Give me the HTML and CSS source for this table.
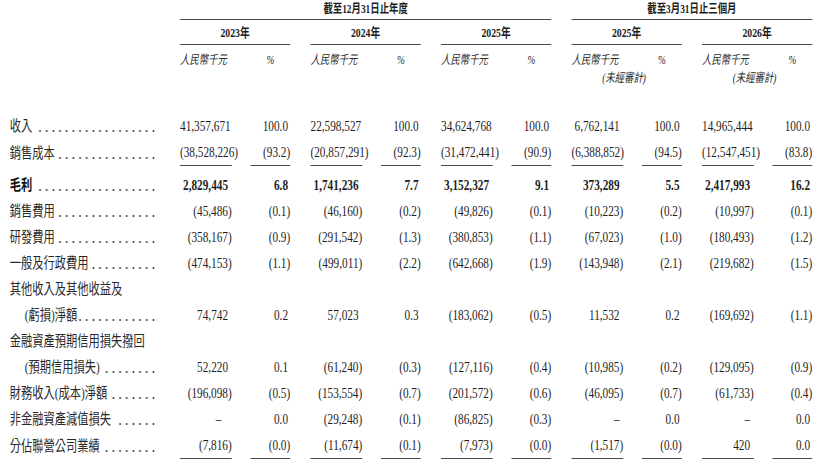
FILE: index.html
```html
<!DOCTYPE html>
<html lang="zh-Hant">
<head>
<meta charset="utf-8">
<title>財務資料</title>
<link rel="stylesheet" href="styles.css">
</head>
<body>
<div class="frame">
<div class="sheet">
  <div class="hrow">
    <div class="sp"></div>
    <div class="super a">截至12月31日止年度</div>
    <div class="super b">截至3月31日止三個月</div>
  </div>
  <div class="hrow">
    <div class="sp"></div>
    <div class="yr">2023年</div>
    <div class="yr">2024年</div>
    <div class="yr">2025年</div>
    <div class="yr">2025年</div>
    <div class="yr">2026年</div>
  </div>
  <div class="hrow units">
    <div class="sp"></div>
    <div class="unit"><div class="u1"><span>人民幣千元</span><span class="pc">%</span></div></div>
    <div class="unit"><div class="u1"><span>人民幣千元</span><span class="pc">%</span></div></div>
    <div class="unit"><div class="u1"><span>人民幣千元</span><span class="pc">%</span></div></div>
    <div class="unit"><div class="u1"><span>人民幣千元</span><span class="pc">%</span></div><div class="u2">(未經審計)</div></div>
    <div class="unit"><div class="u1"><span>人民幣千元</span><span class="pc">%</span></div><div class="u2">(未經審計)</div></div>
  </div>

  <div class="body">
    <div class="row">
      <div class="lbl">收入<span class="dots"></span></div>
      <div class="grp"><span class="amt p">41,357,671</span><span class="pct p">100.0</span></div>
      <div class="grp"><span class="amt p">22,598,527</span><span class="pct p">100.0</span></div>
      <div class="grp"><span class="amt p">34,624,768</span><span class="pct p">100.0</span></div>
      <div class="grp"><span class="amt p">6,762,141</span><span class="pct p">100.0</span></div>
      <div class="grp"><span class="amt p">14,965,444</span><span class="pct p">100.0</span></div>
    </div>
    <div class="row ul">
      <div class="lbl">銷售成本<span class="dots tight"></span></div>
      <div class="grp"><span class="amt">(38,528,226)</span><span class="pct">(93.2)</span></div>
      <div class="grp"><span class="amt">(20,857,291)</span><span class="pct">(92.3)</span></div>
      <div class="grp"><span class="amt">(31,472,441)</span><span class="pct">(90.9)</span></div>
      <div class="grp"><span class="amt">(6,388,852)</span><span class="pct">(94.5)</span></div>
      <div class="grp"><span class="amt">(12,547,451)</span><span class="pct">(83.8)</span></div>
    </div>
    <div class="row bold after-rule">
      <div class="lbl">毛利<span class="dots"></span></div>
      <div class="grp"><span class="amt p">2,829,445</span><span class="pct p">6.8</span></div>
      <div class="grp"><span class="amt p">1,741,236</span><span class="pct p">7.7</span></div>
      <div class="grp"><span class="amt p">3,152,327</span><span class="pct p">9.1</span></div>
      <div class="grp"><span class="amt p">373,289</span><span class="pct p">5.5</span></div>
      <div class="grp"><span class="amt p">2,417,993</span><span class="pct p">16.2</span></div>
    </div>
    <div class="row">
      <div class="lbl">銷售費用<span class="dots tight"></span></div>
      <div class="grp"><span class="amt">(45,486)</span><span class="pct">(0.1)</span></div>
      <div class="grp"><span class="amt">(46,160)</span><span class="pct">(0.2)</span></div>
      <div class="grp"><span class="amt">(49,826)</span><span class="pct">(0.1)</span></div>
      <div class="grp"><span class="amt">(10,223)</span><span class="pct">(0.2)</span></div>
      <div class="grp"><span class="amt">(10,997)</span><span class="pct">(0.1)</span></div>
    </div>
    <div class="row">
      <div class="lbl">研發費用<span class="dots tight"></span></div>
      <div class="grp"><span class="amt">(358,167)</span><span class="pct">(0.9)</span></div>
      <div class="grp"><span class="amt">(291,542)</span><span class="pct">(1.3)</span></div>
      <div class="grp"><span class="amt">(380,853)</span><span class="pct">(1.1)</span></div>
      <div class="grp"><span class="amt">(67,023)</span><span class="pct">(1.0)</span></div>
      <div class="grp"><span class="amt">(180,493)</span><span class="pct">(1.2)</span></div>
    </div>
    <div class="row">
      <div class="lbl">一般及行政費用<span class="dots tight"></span></div>
      <div class="grp"><span class="amt">(474,153)</span><span class="pct">(1.1)</span></div>
      <div class="grp"><span class="amt">(499,011)</span><span class="pct">(2.2)</span></div>
      <div class="grp"><span class="amt">(642,668)</span><span class="pct">(1.9)</span></div>
      <div class="grp"><span class="amt">(143,948)</span><span class="pct">(2.1)</span></div>
      <div class="grp"><span class="amt">(219,682)</span><span class="pct">(1.5)</span></div>
    </div>
    <div class="row">
      <div class="lbl2">
        <div class="l1">其他收入及其他收益及</div>
        <div class="lbl ind">(虧損)淨額<span class="dots tight"></span></div>
      </div>
      <div class="grp"><span class="amt p">74,742</span><span class="pct p">0.2</span></div>
      <div class="grp"><span class="amt p">57,023</span><span class="pct p">0.3</span></div>
      <div class="grp"><span class="amt">(183,062)</span><span class="pct">(0.5)</span></div>
      <div class="grp"><span class="amt p">11,532</span><span class="pct p">0.2</span></div>
      <div class="grp"><span class="amt">(169,692)</span><span class="pct">(1.1)</span></div>
    </div>
    <div class="row">
      <div class="lbl2">
        <div class="l1">金融資產預期信用損失撥回</div>
        <div class="lbl ind">(預期信用損失)<span class="dots"></span></div>
      </div>
      <div class="grp"><span class="amt p">52,220</span><span class="pct p">0.1</span></div>
      <div class="grp"><span class="amt">(61,240)</span><span class="pct">(0.3)</span></div>
      <div class="grp"><span class="amt">(127,116)</span><span class="pct">(0.4)</span></div>
      <div class="grp"><span class="amt">(10,985)</span><span class="pct">(0.2)</span></div>
      <div class="grp"><span class="amt">(129,095)</span><span class="pct">(0.9)</span></div>
    </div>
    <div class="row">
      <div class="lbl">財務收入(成本)淨額<span class="dots tight"></span></div>
      <div class="grp"><span class="amt">(196,098)</span><span class="pct">(0.5)</span></div>
      <div class="grp"><span class="amt">(153,554)</span><span class="pct">(0.7)</span></div>
      <div class="grp"><span class="amt">(201,572)</span><span class="pct">(0.6)</span></div>
      <div class="grp"><span class="amt">(46,095)</span><span class="pct">(0.7)</span></div>
      <div class="grp"><span class="amt">(61,733)</span><span class="pct">(0.4)</span></div>
    </div>
    <div class="row">
      <div class="lbl">非金融資產減值損失<span class="dots"></span></div>
      <div class="grp"><span class="amt p dash">–</span><span class="pct p">0.0</span></div>
      <div class="grp"><span class="amt">(29,248)</span><span class="pct">(0.1)</span></div>
      <div class="grp"><span class="amt">(86,825)</span><span class="pct">(0.3)</span></div>
      <div class="grp"><span class="amt p">–</span><span class="pct p">0.0</span></div>
      <div class="grp"><span class="amt p">–</span><span class="pct p">0.0</span></div>
    </div>
    <div class="row ul">
      <div class="lbl">分佔聯營公司業績<span class="dots"></span></div>
      <div class="grp"><span class="amt">(7,816)</span><span class="pct">(0.0)</span></div>
      <div class="grp"><span class="amt">(11,674)</span><span class="pct">(0.1)</span></div>
      <div class="grp"><span class="amt">(7,973)</span><span class="pct">(0.0)</span></div>
      <div class="grp"><span class="amt">(1,517)</span><span class="pct">(0.0)</span></div>
      <div class="grp"><span class="amt p">420</span><span class="pct p">0.0</span></div>
    </div>
  </div>
</div>
</div>
</body>
</html>
```

FILE: styles.css
```css
html, body {
  margin: 0;
  padding: 0;
  background: #ffffff;
  overflow: hidden;
}

.frame {
  width: 825px;
  height: 465px;
  overflow: hidden;
}

.sheet {
  width: 1100px;
  transform: scaleX(0.75);
  transform-origin: 0 0;
  color: #1e1e1e;
  font-family: "Liberation Serif", "Noto Sans CJK TC", serif;
  font-size: 15px;
}

.hrow {
  display: flex;
  gap: 27px;
}

.sp {
  width: 213px;
  flex: none;
}

.super {
  flex: none;
  text-align: center;
  font-weight: bold;
  font-size: 12.5px;
  line-height: 18px;
  padding-bottom: 1px;
  border-bottom: 1px solid #4a4a4a;
}

.super.a { width: 495px; }
.super.b { width: 321px; }

.yr {
  flex: none;
  width: 147px;
  text-align: center;
  font-weight: bold;
  font-size: 13px;
  line-height: 18px;
  padding-top: 4px;
  padding-bottom: 2px;
  border-bottom: 1px solid #4a4a4a;
}

.units {
  margin-top: 6px;
}

.unit {
  flex: none;
  width: 147px;
  font-style: italic;
  font-size: 12.5px;
  line-height: 18px;
  color: #2a2a2a;
}

.u1 {
  display: flex;
  justify-content: space-between;
}

.u1 .pc {
  width: 53px;
  text-align: center;
}

.u2 {
  padding-left: 41px;
  white-space: nowrap;
}

.body {
  margin-top: 26px;
}

.row {
  display: flex;
  gap: 27px;
  align-items: flex-end;
  line-height: 26px;
}

.lbl {
  width: 213px;
  flex: none;
  box-sizing: border-box;
  padding-left: 13px;
  padding-right: 4px;
  display: flex;
  white-space: nowrap;
  color: #2a2a2a;
}

.lbl2 {
  width: 213px;
  flex: none;
  color: #2a2a2a;
}

.lbl2 .l1 {
  padding-left: 13px;
  white-space: nowrap;
}

.lbl.ind {
  padding-left: 33px;
}

.dots {
  flex: 1;
  margin-left: 6px;
  background-image: radial-gradient(circle, #3a3a3a 0, #3a3a3a 1px, rgba(58, 58, 58, 0) 1.5px);
  background-size: 8.9px 4px;
  background-repeat: repeat-x;
  background-position: right 0 bottom 6px;
}

.dots.tight {
  margin-left: 2px;
}

.grp {
  width: 147px;
  flex: none;
  display: flex;
  justify-content: space-between;
}

.amt {
  width: 69px;
  box-sizing: border-box;
  text-align: right;
  white-space: nowrap;
}

.pct {
  width: 53px;
  box-sizing: border-box;
  text-align: right;
  white-space: nowrap;
}

.amt.p { padding-right: 5px; }
.pct.p { padding-right: 3px; }
.amt.dash { padding-right: 14px; }

.ul .amt,
.ul .pct {
  border-bottom: 1px solid #4a4a4a;
}

.after-rule {
  margin-top: 6px;
}

.bold {
  font-weight: bold;
}

.bold .lbl {
  color: #111111;
}
```
